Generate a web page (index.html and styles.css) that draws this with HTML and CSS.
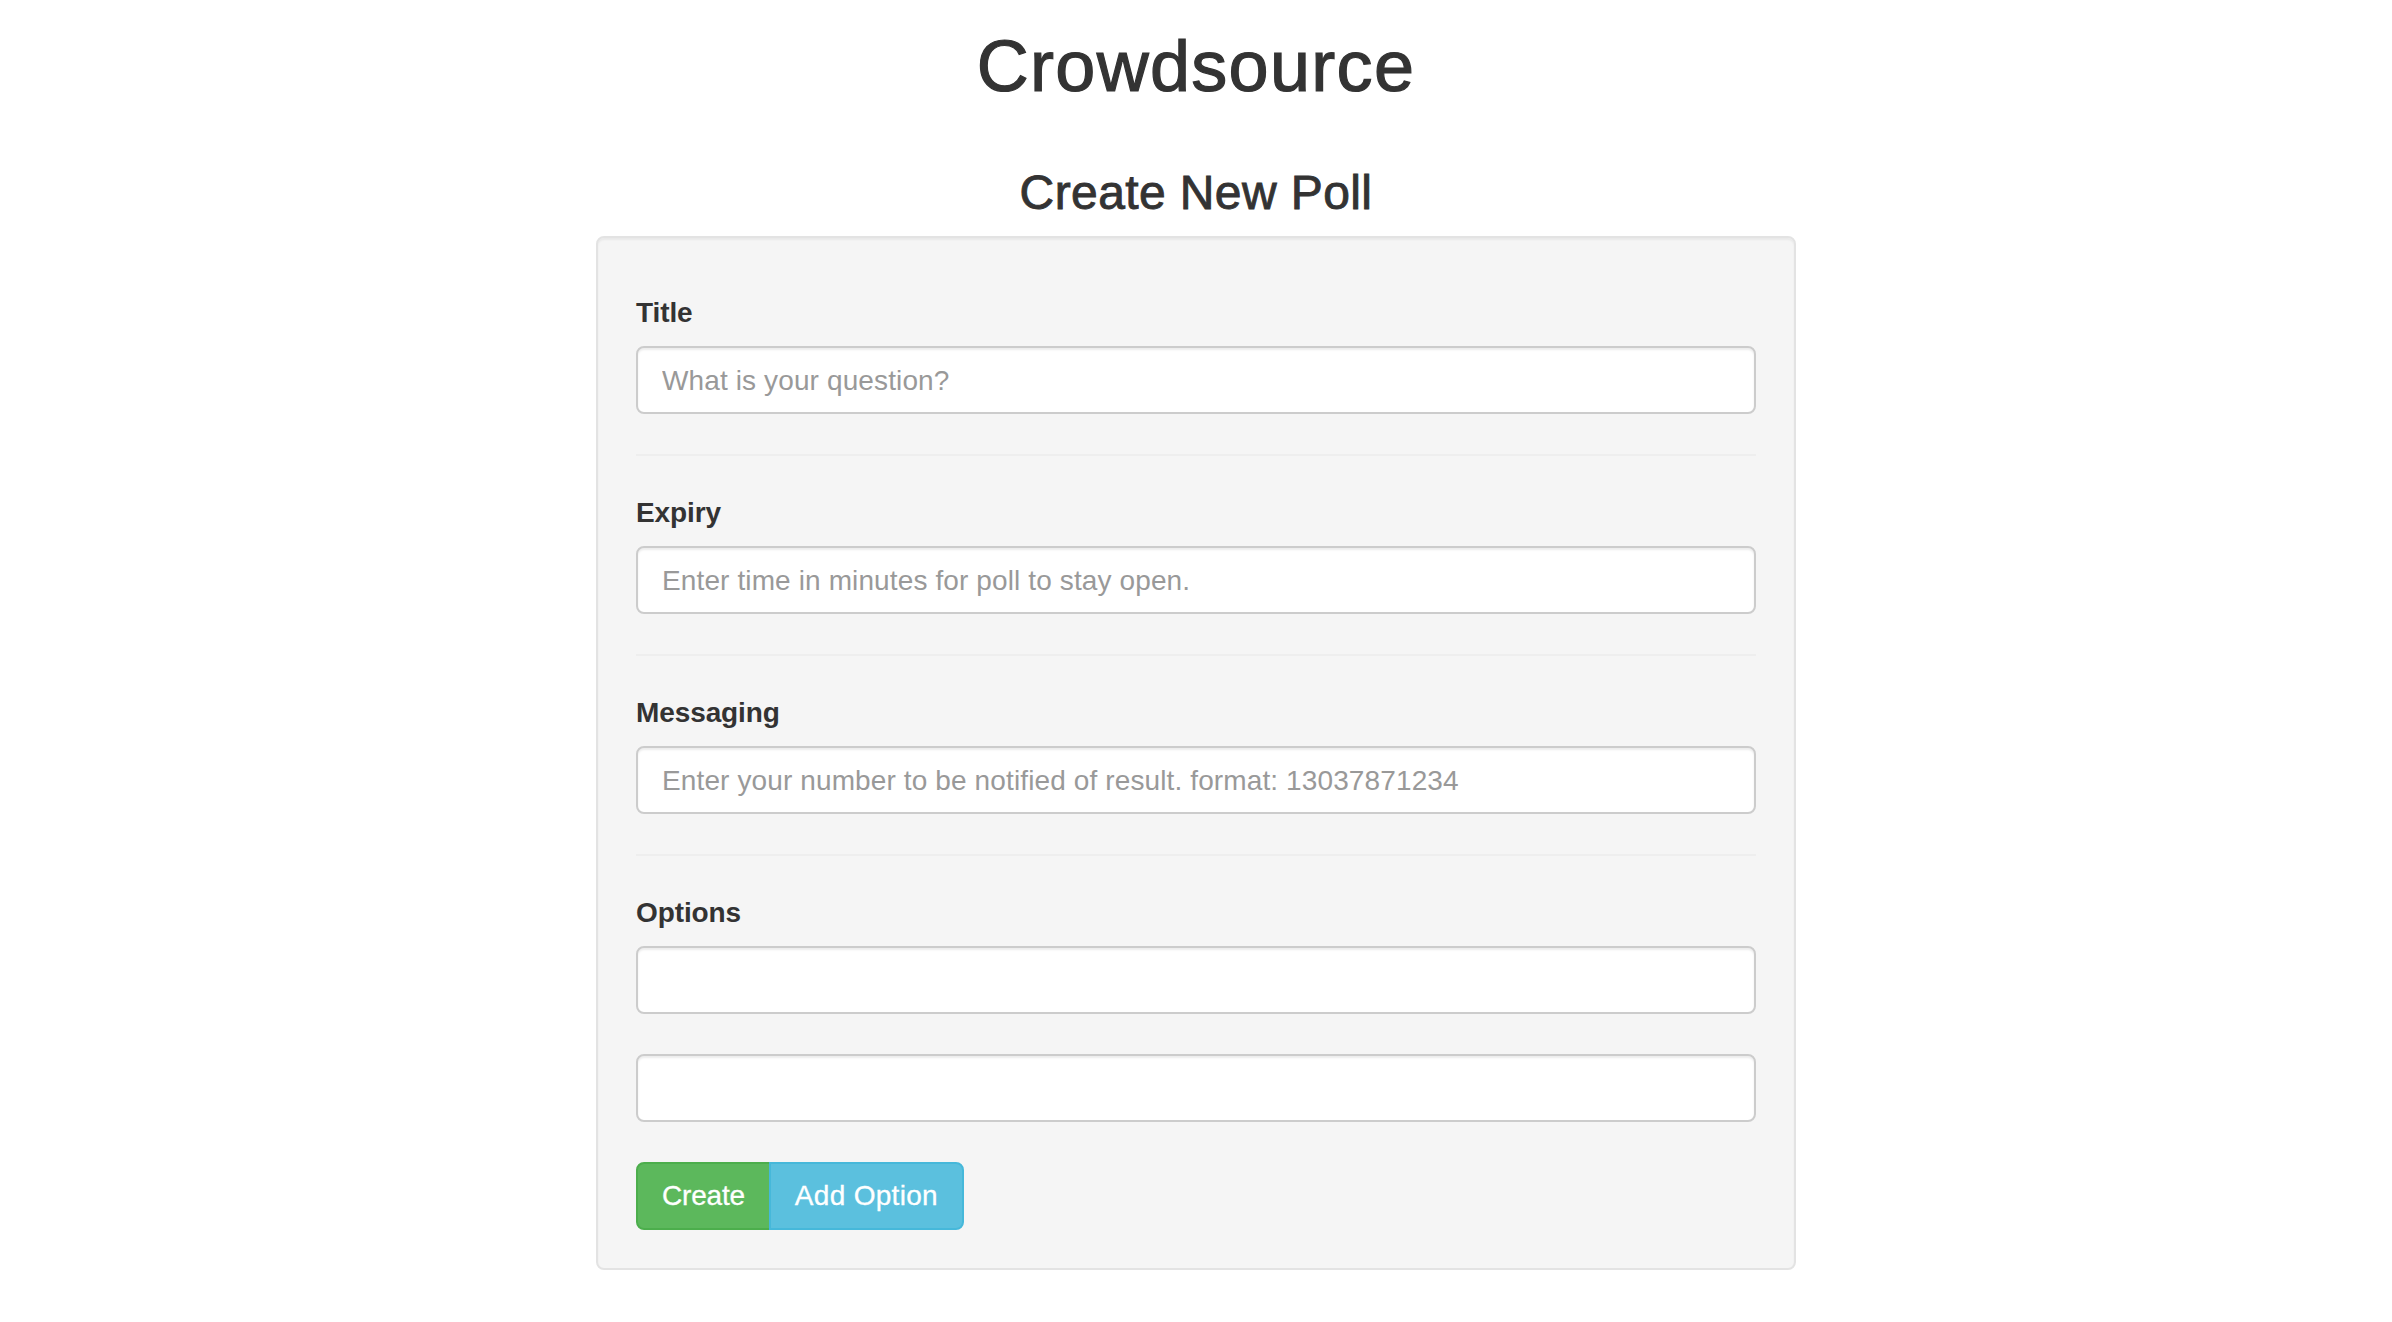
FILE: index.html
```html
<!DOCTYPE html>
<html lang="en">
<head>
<meta charset="utf-8">
<title>Crowdsource</title>
<link rel="stylesheet" href="styles.css">
</head>
<body>
<div class="page">
  <h1 class="brand">Crowdsource</h1>
  <h3 class="subtitle">Create New Poll</h3>
  <form class="well">
    <div class="form-group">
      <label class="field-label">Title</label>
      <input class="form-control" type="text" placeholder="What is your question?">
    </div>
    <hr class="divider">
    <div class="form-group">
      <label class="field-label">Expiry</label>
      <input class="form-control" type="text" placeholder="Enter time in minutes for poll to stay open.">
    </div>
    <hr class="divider">
    <div class="form-group">
      <label class="field-label">Messaging</label>
      <input class="form-control" type="text" placeholder="Enter your number to be notified of result. format: 13037871234">
    </div>
    <hr class="divider">
    <div class="form-group">
      <label class="field-label">Options</label>
      <input class="form-control" type="text">
    </div>
    <div class="form-group">
      <input class="form-control" type="text">
    </div>
    <div class="btn-group">
      <button type="button" class="btn btn-success">Create</button>
      <button type="button" class="btn btn-info">Add Option</button>
    </div>
  </form>
</div>
</body>
</html>
```

FILE: styles.css
```css
* {
  box-sizing: border-box;
}

html, body {
  margin: 0;
  padding: 0;
  background: #ffffff;
}

body {
  font-family: "Liberation Sans", Arial, Helvetica, sans-serif;
  color: #333333;
  font-size: 28px;
  line-height: 40px;
}

.page {
  width: 1200px;
  margin: 0 auto;
}

.brand {
  margin: 27px 0 0 0;
  font-size: 72px;
  font-weight: 400;
  line-height: 1.1;
  letter-spacing: 1.3px;
  text-align: center;
  color: #333333;
  -webkit-text-stroke: 1.2px #333333;
}

.subtitle {
  margin: 61px 0 16px 0;
  font-size: 48px;
  font-weight: 400;
  line-height: 1.1;
  letter-spacing: 0.4px;
  text-align: center;
  color: #333333;
  -webkit-text-stroke: 0.9px #333333;
}

.well {
  display: block;
  margin: 0;
  padding: 58px 38px 38px 38px;
  background: #f5f5f5;
  border: 2px solid #e3e3e3;
  border-radius: 8px;
  box-shadow: inset 0 2px 2px rgba(0, 0, 0, 0.05);
}

.form-group {
  margin-bottom: 40px;
}

.field-label {
  display: block;
  margin-bottom: 16px;
  font-size: 28px;
  font-weight: 700;
  line-height: 34px;
  letter-spacing: -0.1px;
  color: #333333;
}

.form-control {
  display: block;
  width: 100%;
  height: 68px;
  margin: 0;
  padding: 13px 24px 11px 24px;
  font-family: "Liberation Sans", Arial, Helvetica, sans-serif;
  font-size: 28px;
  line-height: 40px;
  letter-spacing: 0.12px;
  color: #555555;
  background: #ffffff;
  border: 2px solid #cccccc;
  border-radius: 8px;
  box-shadow: inset 0 2px 2px rgba(0, 0, 0, 0.075);
  outline: none;
}

.form-control::placeholder {
  color: #999999;
  opacity: 1;
}

.divider {
  margin: 0 0 40px 0;
  height: 0;
  border: 0;
  border-top: 2px solid #eeeeee;
}

.btn-group {
  display: flex;
}

.btn {
  display: inline-block;
  height: 68px;
  margin: 0;
  padding: 12px 24px;
  font-family: "Liberation Sans", Arial, Helvetica, sans-serif;
  font-size: 28px;
  line-height: 40px;
  font-weight: 400;
  color: #ffffff;
  border: 2px solid transparent;
  -webkit-text-stroke: 0.3px #ffffff;
  cursor: pointer;
}

.btn-success {
  background: #5cb85c;
  border-color: #4cae4c;
  border-radius: 8px 0 0 8px;
  letter-spacing: -0.2px;
}

.btn-info {
  margin-left: -2px;
  background: #5bc0de;
  border-color: #46b8da;
  border-radius: 0 8px 8px 0;
  letter-spacing: 0.3px;
}
```
